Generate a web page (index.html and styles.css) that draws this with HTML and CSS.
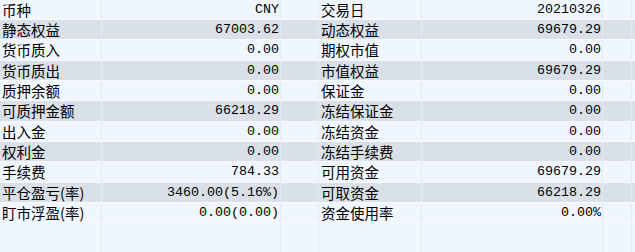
FILE: index.html
```html
<!DOCTYPE html>
<html><head><meta charset="utf-8"><link rel="stylesheet" href="styles.css"></head>
<body>
<div class="grid">
<div class="row"><div class="c1">币种</div><div class="c2">CNY</div><div class="c3"></div><div class="c4">交易日</div><div class="c5">20210326</div><div class="c6"></div><div class="c7"></div></div>
<div class="row alt"><div class="c1">静态权益</div><div class="c2">67003.62</div><div class="c3"></div><div class="c4">动态权益</div><div class="c5">69679.29</div><div class="c6"></div><div class="c7"></div></div>
<div class="row tall"><div class="c1">货币质入</div><div class="c2">0.00</div><div class="c3"></div><div class="c4">期权市值</div><div class="c5">0.00</div><div class="c6"></div><div class="c7"></div></div>
<div class="row alt"><div class="c1">货币质出</div><div class="c2">0.00</div><div class="c3"></div><div class="c4">市值权益</div><div class="c5">69679.29</div><div class="c6"></div><div class="c7"></div></div>
<div class="row"><div class="c1">质押余额</div><div class="c2">0.00</div><div class="c3"></div><div class="c4">保证金</div><div class="c5">0.00</div><div class="c6"></div><div class="c7"></div></div>
<div class="row alt tall"><div class="c1">可质押金额</div><div class="c2">66218.29</div><div class="c3"></div><div class="c4">冻结保证金</div><div class="c5">0.00</div><div class="c6"></div><div class="c7"></div></div>
<div class="row"><div class="c1">出入金</div><div class="c2">0.00</div><div class="c3"></div><div class="c4">冻结资金</div><div class="c5">0.00</div><div class="c6"></div><div class="c7"></div></div>
<div class="row alt"><div class="c1">权利金</div><div class="c2">0.00</div><div class="c3"></div><div class="c4">冻结手续费</div><div class="c5">0.00</div><div class="c6"></div><div class="c7"></div></div>
<div class="row tall"><div class="c1">手续费</div><div class="c2">784.33</div><div class="c3"></div><div class="c4">可用资金</div><div class="c5">69679.29</div><div class="c6"></div><div class="c7"></div></div>
<div class="row alt"><div class="c1">平仓盈亏(率)</div><div class="c2">3460.00(5.16%)</div><div class="c3"></div><div class="c4">可取资金</div><div class="c5">66218.29</div><div class="c6"></div><div class="c7"></div></div>
<div class="row"><div class="c1">盯市浮盈(率)</div><div class="c2">0.00(0.00)</div><div class="c3"></div><div class="c4">资金使用率</div><div class="c5">0.00%</div><div class="c6"></div><div class="c7"></div></div>
<div class="row last"><div class="c1"></div><div class="c2"></div><div class="c3"></div><div class="c4"></div><div class="c5"></div><div class="c6"></div><div class="c7"></div></div>
</div>
</body></html>
```
FILE: styles.css
```css
html, body { margin: 0; padding: 0; background: #f0f6fe; }
.grid { width: 635px; height: 252px; overflow: hidden; font-family: "Noto Sans CJK SC", "Liberation Mono", monospace; font-size: 14.5px; color: #000; }
.row { display: grid; grid-template-columns: 101px 178px 37px 102px 180px 28px 1fr; column-gap: 1px; height: 19px; border-bottom: 1px solid #f8fafd; background: #e3e9f1; }
.row.tall { height: 20px; }
.row.last { height: 40px; border-bottom: 0; }
.row > div { background: #f0f6fe; line-height: 19px; white-space: nowrap; overflow: hidden; }
.row.tall > div { line-height: 20px; }
.row.alt > div { background: #d9e0e8; }
.c1, .c4 { padding-left: 2px; }
.c2, .c5 { text-align: right; padding-right: 1px; font-family: "Liberation Mono", monospace; font-size: 13.33px; }
```
